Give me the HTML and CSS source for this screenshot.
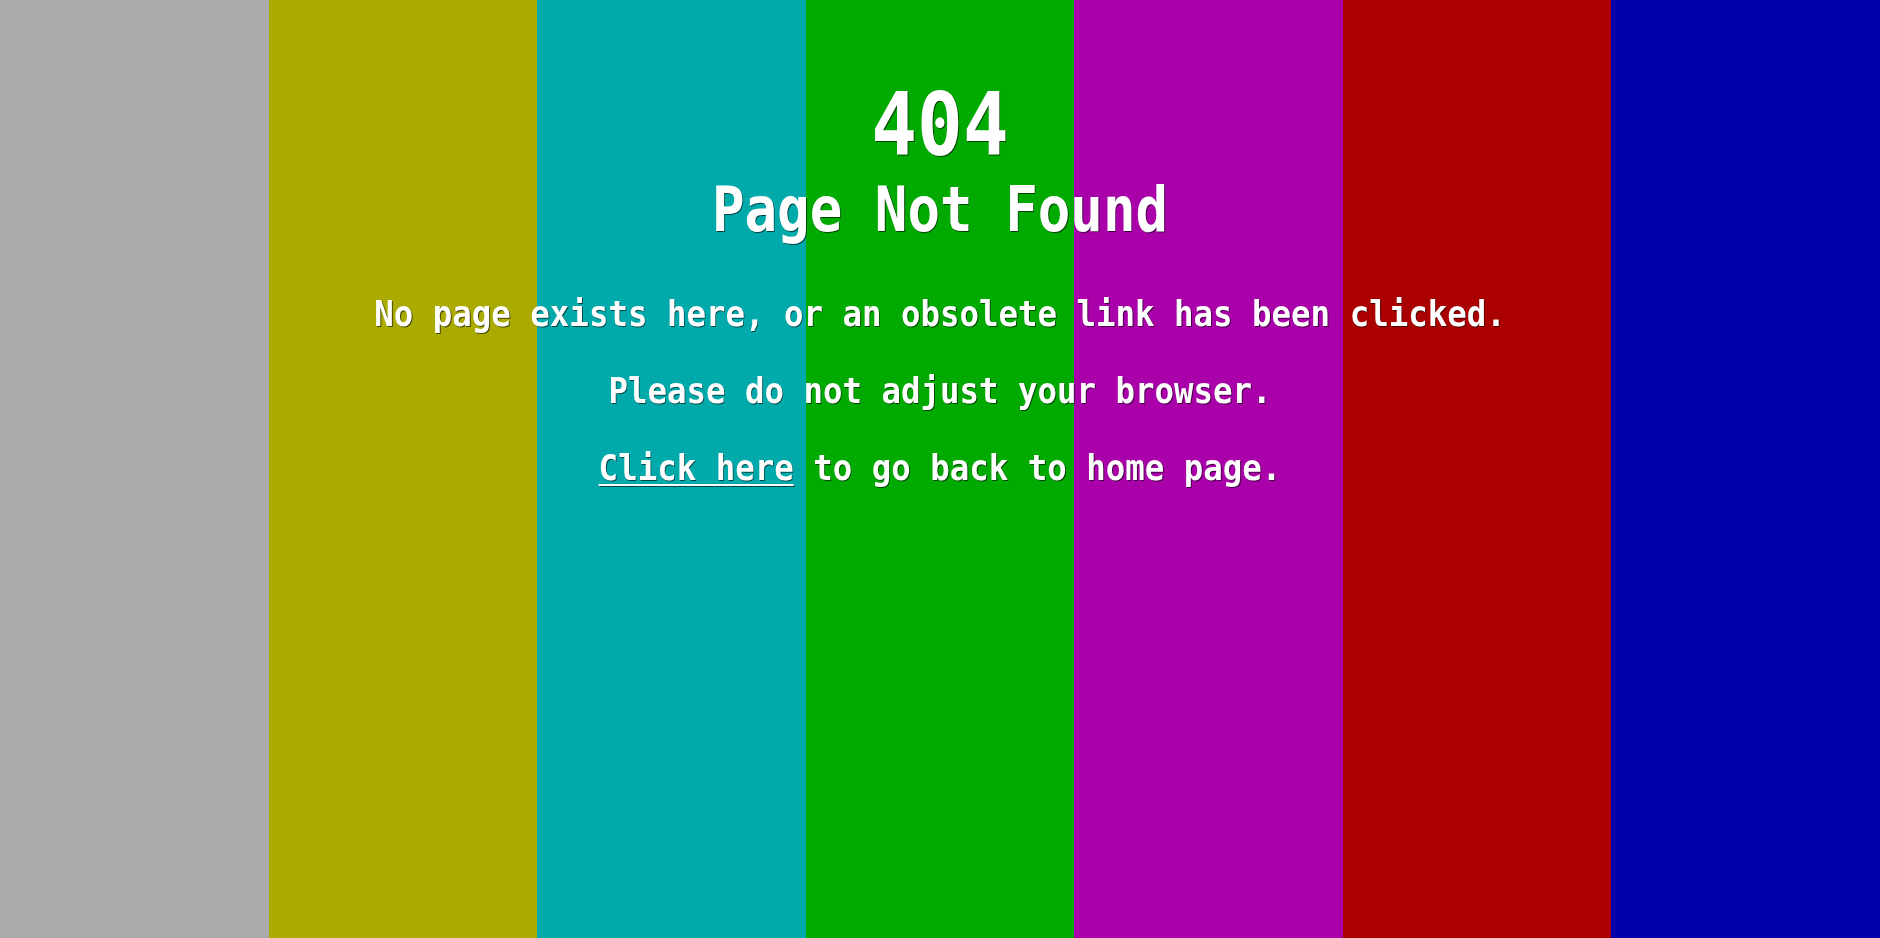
FILE: index.html
```html
<!DOCTYPE html>
<html lang="en">
<head>
<meta charset="utf-8">
<title>404 - Page Not Found</title>
<link rel="stylesheet" href="styles.css">
</head>
<body>
<main class="screen">
  <div class="content">
    <h1 class="code">404</h1>
    <h2 class="title">Page Not Found</h2>
    <p class="line">No page exists here, or an obsolete link has been clicked.</p>
    <p class="line">Please do not adjust your browser.</p>
    <p class="line"><a class="home-link" href="#">Click here</a> to go back to home page.</p>
  </div>
</main>
</body>
</html>
```

FILE: styles.css
```css
html, body {
  margin: 0;
  padding: 0;
  height: 100%;
}

body {
  overflow: hidden;
}

.screen {
  height: 100vh;
  background: linear-gradient(to right,
    #aaaaaa 0, #aaaaaa 14.2857%,
    #aaaa00 14.2857%, #aaaa00 28.5714%,
    #00aaaa 28.5714%, #00aaaa 42.8571%,
    #00aa00 42.8571%, #00aa00 57.1429%,
    #aa00aa 57.1429%, #aa00aa 71.4286%,
    #aa0000 71.4286%, #aa0000 85.7143%,
    #0000aa 85.7143%, #0000aa 100%);
  font-family: "DejaVu Sans Mono", "Liberation Mono", monospace;
  font-weight: bold;
  color: #ffffff;
  text-align: center;
  text-shadow: 1px 1px 0 rgba(0, 0, 0, 0.6);
  padding-top: 80px;
  box-sizing: border-box;
}

.content {
  transform: scaleX(0.9);
}

.code {
  margin: 0;
  font-size: 88px;
  line-height: 89px;
  font-weight: bold;
  transform: scaleX(0.96);
}

.title {
  margin: 10px 0 0;
  font-size: 62px;
  line-height: 62px;
  font-weight: bold;
  transform: scaleX(0.97);
}

.line {
  margin: 0;
  font-size: 36px;
  line-height: 77px;
}

.title + .line {
  margin-top: 34px;
}

.home-link {
  color: #ffffff;
  text-decoration: underline;
  text-decoration-thickness: 2px;
  text-underline-offset: 4px;
}
```
